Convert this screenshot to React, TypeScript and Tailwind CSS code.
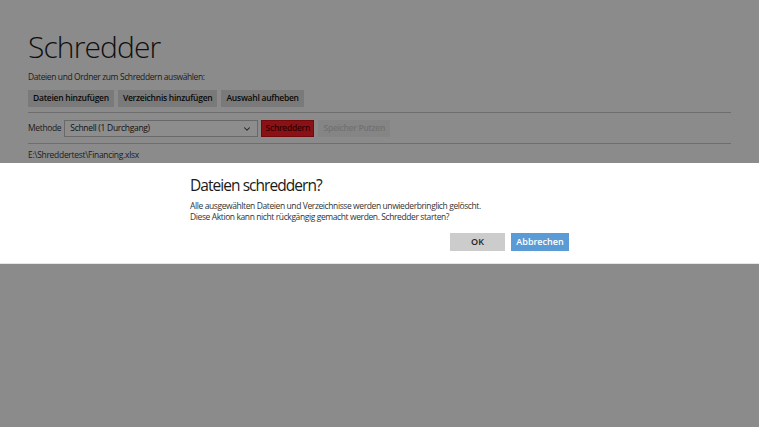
import React from 'react';
import { ChevronDown } from 'lucide-react';

export default function App() {
  return (
    <div className="relative w-[759px] h-[427px] overflow-hidden bg-[#e8e8e8] text-[#222] font-['Open_Sans',sans-serif]">
      {/* Page */}
      <div className="pl-[28px] pr-[28px] pt-[27px]">
        <h1 className="text-[30px] font-light leading-[40px] text-[#1a1a1a] tracking-[-0.9px]">Schredder</h1>
        <p className="mt-[4px] text-[8.5px] leading-[12px] tracking-[-0.4px] text-[#333]">Dateien und Ordner zum Schreddern auswählen:</p>
        <div className="mt-[7px] flex gap-[4px]">
          {['Dateien hinzufügen', 'Verzeichnis hinzufügen', 'Auswahl aufheben'].map(t => (
            <button key={t} className="h-[17px] px-[5px] bg-[#cbcbcb] text-[8.5px] tracking-[-0.25px] font-semibold text-[#111]">
              {t}
            </button>
          ))}
        </div>
        <div className="mt-[5px] h-px bg-[#b8b8b8]" />
        <div className="mt-[7px] flex items-center">
          <span className="text-[8.5px] tracking-[-0.35px] text-[#333] mr-[3px]">Methode</span>
          <div className="h-[17px] w-[194px] border border-[#b0b0b0] bg-[#ebebeb] flex items-center justify-between pl-[5px] pr-[5px]">
            <span className="text-[8.5px] tracking-[-0.3px] text-[#222]">Schnell (1 Durchgang)</span>
            <ChevronDown size={10} strokeWidth={2.5} className="text-[#333]" />
          </div>
          <button className="ml-[3px] h-[17px] w-[53px] bg-[#e61f26] border border-[#c21015] text-[8.5px] tracking-[-0.3px] font-semibold text-[#5a0000]">Schreddern</button>
          <button className="ml-[4px] h-[17px] w-[72px] bg-[#dedede] text-[8.5px] tracking-[-0.3px] font-semibold text-[#bdbdbd]">Speicher Putzen</button>
        </div>
        <div className="mt-[6px] h-px bg-[#b8b8b8]" />
        <p className="mt-[5px] text-[8.5px] tracking-[-0.3px] text-[#333]">E:\Shreddertest\Financing.xlsx</p>
      </div>

      {/* Overlay */}
      <div className="absolute inset-0 bg-black/40" />

      {/* Dialog */}
      <div className="absolute left-0 right-0 top-[163px] h-[101px] bg-white border-b border-[#e6e6e6]">
        <div className="pl-[190px] pr-[190px] pt-[11px]">
          <h2 className="text-[15.5px] leading-[22px] tracking-[-0.95px] text-[#1a1a1a]">Dateien schreddern?</h2>
          <p className="mt-[4px] text-[8.5px] leading-[11px] tracking-[-0.4px] text-[#333]">
            Alle ausgewählten Dateien und Verzeichnisse werden unwiederbringlich gelöscht.
            <br />
            Diese Aktion kann nicht rückgängig gemacht werden. Schredder starten?
          </p>
          <div className="mt-[11px] flex justify-end gap-[6px]">
            <button className="h-[18px] w-[55px] bg-[#cccccc] text-[9px] font-semibold text-[#222]">OK</button>
            <button className="h-[18px] w-[58px] bg-[#5b9bd5] text-[9px] font-semibold text-white">Abbrechen</button>
          </div>
        </div>
      </div>
    </div>
  );
}
